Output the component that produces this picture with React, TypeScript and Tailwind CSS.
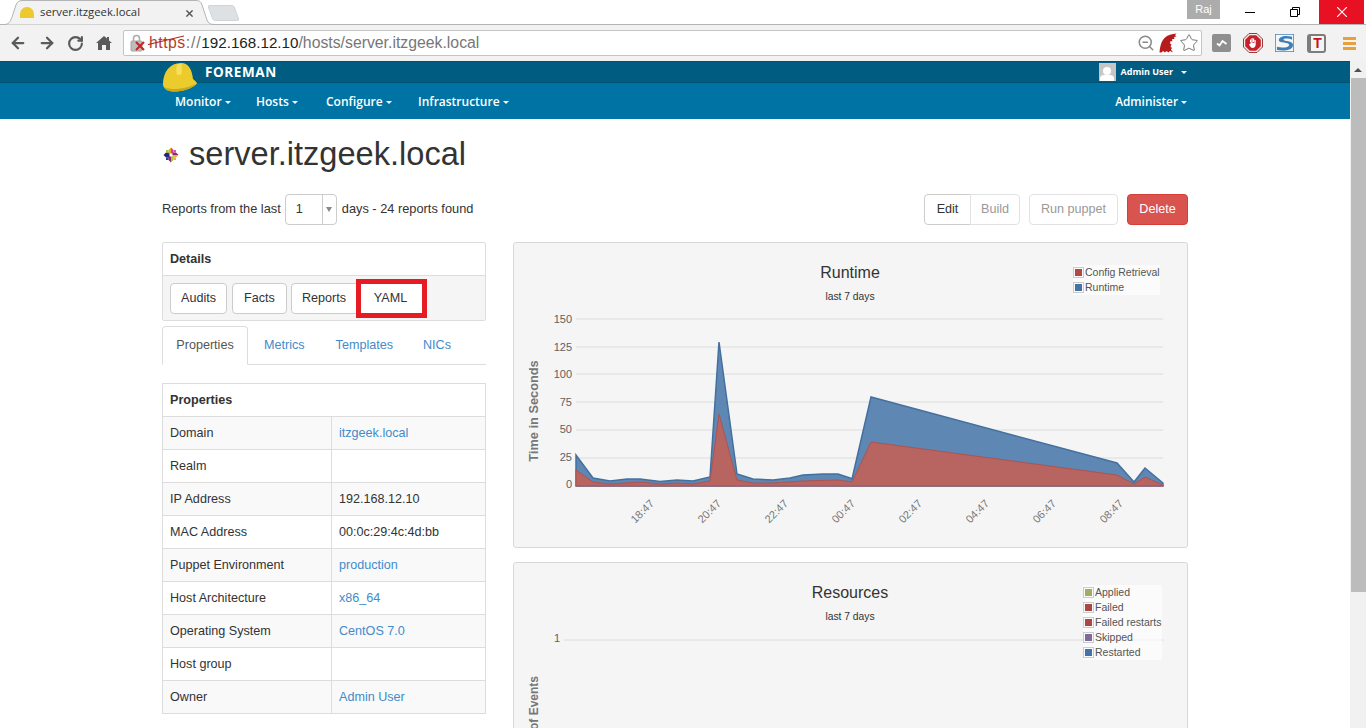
import React from "react";
import { ArrowLeft, ArrowRight, RotateCw, ZoomOut, Star } from "lucide-react";

const blue = "576,455 593,478 610,481 627,479 640,479 660,481.5 677,480 693,481 710,477 719,342 737,474 753,479 773,480 790,478 803,475 823,474 838,474 850,478 852,479 871,397 1117,463 1134,482 1145,468 1163,483";
const red = "576,470 593,482 610,484 640,482 660,484 677,483 693,484 710,481 719,414 737,480 753,483 773,483 803,481 838,480 852,482 871,442 1117,475 1134,484 1145,477 1163,485";
const ox = 514, oy = 243;
const shift = (s: string) => s.split(" ").map(p => { const [x, y] = p.split(",").map(Number); return `${x - ox},${y - oy}`; }).join(" ");
const baseY = 486 - oy;
const x0 = 576 - ox, x1 = 1163 - ox;

function Caret() {
  return <span className="inline-block ml-[3px] align-middle w-0 h-0 border-x-[3.5px] border-x-transparent border-t-[3.5px] border-t-white" />;
}

function Helmet() {
  return (
    <svg viewBox="0 0 36 30" className="absolute left-[0px] top-[0px] w-[36px] h-[30px]">
      <path d="M1 22C1 10 8 1 19 1C27 1 30 8 31 17C33 19 35 20 35 21.500C30 27 20 29.500 12 29.500C6 29.500 1 27 1 22Z" fill="#eccb2c" />
      <path d="M2 25C6 27 12 27.500 17 26.800C24 26 30 24 35 21.500C30 27 20 29.500 12 29.500C7 29.500 3.500 28 2 25Z" fill="#c9a81c" />
      <path d="M15 2.500C14 6 14 10 15 13L19.500 12.500C20 9 20 5 19.500 1.500Z" fill="#f6df5c" />
    </svg>
  );
}

function CentosLogo() {
  return (
    <svg viewBox="0 0 16 16" className="w-4 h-4 mr-[10px] mt-[18px] ml-px shrink-0">
      <path d="M8 0.500L10.500 3V6.500H8Z" fill="#d63f9b" />
      <path d="M15.500 8L13 10.500H9.500V8Z" fill="#e8b23c" />
      <path d="M8 15.500L5.500 13V9.500H8Z" fill="#932279" />
      <path d="M0.500 8L3 5.500H6.500V8Z" fill="#262577" />
      <path d="M8 0.500L5.500 3V6.500H8Z" fill="#efa724" />
      <path d="M15.500 8L13 5.500H9.500V8Z" fill="#932279" />
      <path d="M8 15.500L10.500 13V9.500H8Z" fill="#9ccd2a" />
      <path d="M0.500 8L3 10.500H6.500V8Z" fill="#262577" />
      <rect x="10.500" y="3" width="2.500" height="2.500" fill="#c85fa8" />
      <rect x="10.500" y="10.500" width="2.500" height="2.500" fill="#e8b23c" />
      <rect x="3" y="10.500" width="2.500" height="2.500" fill="#3a3a8c" />
      <rect x="3" y="3" width="2.500" height="2.500" fill="#9ccd2a" />
    </svg>
  );
}

function Toolbar() {
  return (
    <div className="h-[36px] bg-[#f2f2f2] flex items-center text-[#5a5a5a]">
      <div className="w-[123px] flex items-center pl-[9px]">
        <ArrowLeft size={18} strokeWidth={3} />
        <ArrowRight size={18} strokeWidth={3} className="ml-[11px]" />
        <RotateCw size={17} strokeWidth={3} className="ml-[11px]" />
        <svg viewBox="0 0 16 16" className="w-[16px] h-[16px] ml-[12px]">
          <path d="M8 1L11 3.600V2H13V5.400L16 8H14V15H10V10H6V15H2V8H0Z" fill="#5a5a5a" />
        </svg>
      </div>
      <div className="w-[1079px] h-[26px] bg-white border border-[#c4c4c4] rounded-[2px] flex items-center">
        <div className="relative w-[25px] h-full shrink-0">
          <svg viewBox="0 0 16 18" className="absolute left-[6px] top-[3px] w-[16px] h-[18px]">
            <rect x="1" y="7" width="11" height="10" rx="1" fill="#bdbdbd" stroke="#a4a4a4" />
            <path d="M3.500 7V4.500a3 3 0 0 1 6 0V7" fill="none" stroke="#aaa" strokeWidth="1.500" />
            <path d="M6 8L14 16M14 8L6 16" stroke="#c8241b" strokeWidth="2" />
          </svg>
        </div>
        <span className="text-[15.800px] leading-none text-[#777] relative whitespace-nowrap">
          <span className="text-[#b04030] tracking-[0.5px]">https</span>
          <svg viewBox="0 0 36 10" className="absolute left-[-1px] top-[0px] w-[36px] h-[10px]"><line x1="0" y1="9.500" x2="36" y2="1" stroke="#b0281c" strokeWidth="1.200" /></svg>
          <span className="tracking-[0.8px]">://</span><span className="text-[#222] text-[15.200px]">192.168.12.10</span>/hosts/server.itzgeek.local
        </span>
        <div className="ml-auto flex items-center pr-[2px]">
          <ZoomOut size={18} strokeWidth={2} className="text-[#8a8a8a] mr-[4px]" />
          <svg viewBox="0 0 18 20" className="w-[18px] h-[20px]">
            <path d="M0.500 19.500C1 14 2 8.500 5.500 5C8.500 2 13 0.800 17.500 0.500L16 2.200L17.500 3.500L15 4L15.500 6L13.200 6L13.200 8.500L11.500 8L11 10.500L12.500 11.500L11.500 13.500L13 15L12 16.500L14 19.500L11 18L9.500 19.500L7.500 18L6 19.500L4 18L2.500 19.500Z" fill="#b71c1c" />
          </svg>
          <Star size={20} strokeWidth={1.200} className="text-[#777] ml-[2px]" />
        </div>
      </div>
      <div className="flex-1 flex items-center pl-[10px]">
        <div className="w-[19px] h-[18px] bg-[#8f8f8f] rounded-[2px] flex items-center justify-center">
          <svg viewBox="0 0 12 8" className="w-[12px] h-[8px]"><path d="M1 4.500L3.500 6.500L6.500 2L10.500 5" fill="none" stroke="#fff" strokeWidth="1.800" /></svg>
        </div>
        <svg viewBox="0 0 20 20" className="w-[20px] h-[20px] ml-[12px]">
          <polygon points="6,0.500 14,0.500 19.500,6 19.500,14 14,19.500 6,19.500 0.500,14 0.500,6" fill="#f4eaea" stroke="#8c2a2a" strokeWidth="0.900" />
          <polygon points="6.800,2.200 13.200,2.200 17.800,6.800 17.800,13.200 13.200,17.800 6.800,17.800 2.200,13.200 2.200,6.800" fill="#c8202a" />
          <path d="M7 9V6.500h1.200V9M8.500 9V5h1.200V9M10 9V5.500h1.200V9M11.500 10V7h1.200V11.500C12.700 14 11 15 9.500 15C8 15 7.300 13.500 6 11.500L7 10.800L7.500 11V9Z" fill="#fff" />
        </svg>
        <svg viewBox="0 0 20 19" className="w-[19px] h-[18px] ml-[12px]">
          <rect width="20" height="19" fill="#f5f5f5" stroke="#3f7fb8" strokeWidth="1.500" />
          <path d="M18 3C10 1 4 3 4 6.500C4 10 15 8 15 11.500C15 14 8 15 2 13.500L2 17C11 18.500 19 16.500 19 11.500C19 6.500 9 8 9 6C9 4.500 14 4.500 18 6Z" fill="#3f7fb8" />
        </svg>
        <div className="w-[19px] h-[19px] ml-[13px] bg-[#f4f4f4] border-2 border-l-4 border-[#7d7d7d] rounded-[3px] flex items-center justify-center">
          <span className="text-[14px] leading-none font-bold text-[#c4161c] font-['Liberation_Sans',sans-serif]">T</span>
        </div>
        <div className="ml-[17px] w-[13px] flex flex-col gap-[2px]">
          <span className="h-[3px] bg-[#e8a13a]" /><span className="h-[3px] bg-[#e8a13a]" /><span className="h-[3px] bg-[#e8a13a]" />
        </div>
      </div>
    </div>
  );
}

function TabStrip() {
  return (
    <div className="h-[25px] bg-white border-b border-[#b4b4b4] relative flex font-['Open_Sans',sans-serif]">
      <div className="relative w-[212px] h-[25px] ml-[4px] flex items-center pl-[16px]">
        <svg viewBox="0 0 212 25" className="absolute inset-0 w-[212px] h-[25px]">
          <path d="M0 24.500C5 24.500 6 22 8 17L12 5C13 2 15 0.500 18 0.500H192C196 0.500 197 2 198 5L203 20C204 23 206 24.500 210 24.500" fill="#f2f2f2" stroke="#b4b4b4" />
        </svg>
        <span className="relative w-[14px] h-[11px] mt-[-1px] rounded-t-full rounded-b-[3px] bg-[#ecc92c]" />
        <span className="relative ml-[6px] text-[11.300px] text-[#333] whitespace-nowrap">server.itzgeek.local</span>
        <svg viewBox="0 0 8 8" className="absolute left-[182px] top-[10px] w-[7px] h-[7px]"><path d="M0.500 0.500L7.500 7.500M7.500 0.500L0.500 7.500" stroke="#555" strokeWidth="1.600" /></svg>
      </div>
      <div className="w-[27px] h-[16px] mt-[5px] -ml-[6px] bg-[#dde1e4] rounded-[3px] skew-x-[20deg] border border-[#d0d4d8]" />
      <div className="ml-auto flex">
        <div className="w-[33px] h-[19px] bg-[#acacac] flex items-center justify-center text-[11px] text-white font-['Liberation_Sans',sans-serif] mr-[7px]">Raj</div>
        <div className="w-[46px] h-[24px] flex items-center justify-center"><span className="w-[10px] h-[1px] mt-[1px] bg-black" /></div>
        <div className="w-[46px] h-[24px] flex items-center justify-center pr-[2px]">
          <svg viewBox="0 0 10 10" className="w-[10px] h-[10px]"><path d="M0.500 2.500H7.500V9.500H0.500ZM2.500 2.500V0.500H9.500V7.500H7.500" fill="none" stroke="#000" /></svg>
        </div>
        <div className="w-[45px] h-[24px] bg-[#e81123] flex items-center justify-center mr-[2px]">
          <svg viewBox="0 0 10 10" className="w-[10px] h-[10px]"><path d="M0 0L10 10M10 0L0 10" stroke="#fff" strokeWidth="1.100" /></svg>
        </div>
      </div>
    </div>
  );
}

function Nav() {
  return (
    <div className="font-['Open_Sans',sans-serif] text-white">
      <div className="h-[22px] bg-[#005c80] border-y border-[#00506f]">
        <div className="relative w-[1026px] ml-[162px] h-full flex items-center">
          <Helmet />
          <span className="ml-[43px] mt-[1px] text-[13.500px] font-bold tracking-[0.6px]">FOREMAN</span>
          <div className="ml-auto flex items-center mr-[1px]">
            <span className="w-[17px] h-[18px] bg-[#c6c6c6] flex flex-col items-center justify-end overflow-hidden mr-[5px]">
              <span className="w-[8px] h-[8px] rounded-full bg-white" />
              <span className="w-[14px] h-[6px] rounded-t-[4px] bg-white" />
            </span>
            <span className="text-[9px] font-bold">Admin User</span>
            <span className="w-[5px]" />
            <Caret />
          </div>
        </div>
      </div>
      <div className="h-[36px] bg-[#0073a5]">
        <div className="w-[1026px] ml-[162px] h-full flex items-center text-[12px] font-semibold pt-[1px]">
          <a className="ml-[13px] w-[81px]">Monitor<Caret /></a>
          <a className="w-[70px]">Hosts<Caret /></a>
          <a className="w-[92px]">Configure<Caret /></a>
          <a>Infrastructure<Caret /></a>
          <a className="ml-auto mr-[1px] text-[11.800px]">Administer<Caret /></a>
        </div>
      </div>
    </div>
  );
}

function Btn({ children, className = "" }: { children: React.ReactNode; className?: string }) {
  return <span className={"h-[31px] flex items-center justify-center border border-[#ccc] rounded-[4px] bg-white " + className}>{children}</span>;
}

function LeftColumn() {
  const rows: [string, string, boolean][] = [
    ["Domain", "itzgeek.local", true],
    ["Realm", "", false],
    ["IP Address", "192.168.12.10", false],
    ["MAC Address", "00:0c:29:4c:4d:bb", false],
    ["Puppet Environment", "production", true],
    ["Host Architecture", "x86_64", true],
    ["Operating System", "CentOS 7.0", true],
    ["Host group", "", false],
    ["Owner", "Admin User", true],
  ];
  return (
    <div className="w-[324px] shrink-0">
      <div className="border border-[#ddd] rounded-[2px]">
        <div className="h-[33px] flex items-center px-[7px] font-bold border-b border-[#ddd]">Details</div>
        <div className="h-[44px] bg-[#f5f5f5] flex items-center pl-[7px] relative">
          <Btn className="w-[57px] mr-[5px]">Audits</Btn>
          <Btn className="w-[55px] mr-[4px]">Facts</Btn>
          <Btn className="w-[68px] pr-[2px]">Reports</Btn>
          <span className="relative h-[39px] w-[71px] -ml-[3px] pr-[2px] border-[5px] border-[#e51c23] bg-white flex items-center justify-center">YAML</span>
        </div>
      </div>
      <div className="h-[39px] mt-[5px] border-b border-[#ddd] flex">
        <span className="w-[86px] h-[39px] bg-white border border-[#ddd] border-b-white rounded-t-[4px] flex items-center justify-center text-[#555]">Properties</span>
        <span className="ml-[16px] flex items-center text-[#428bca]">Metrics</span>
        <span className="ml-[31px] flex items-center text-[#428bca]">Templates</span>
        <span className="ml-[30px] flex items-center text-[#428bca]">NICs</span>
      </div>
      <div className="mt-[18px] border border-[#ddd]">
        <div className="h-[32px] flex items-center px-[7px] font-bold">Properties</div>
        {rows.map(([k, v, link], i) => (
          <div key={k} className={"h-[33px] flex border-t border-[#ddd] " + (i % 2 === 0 ? "bg-[#f9f9f9]" : "bg-white")}>
            <div className="w-[169px] border-r border-[#ddd] flex items-center px-[7px]">{k}</div>
            <div className={"flex items-center px-[7px] " + (link ? "text-[#428bca]" : "")}>{v}</div>
          </div>
        ))}
      </div>
    </div>
  );
}

function Legend({ items, className }: { items: [string, string][]; className: string }) {
  return (
    <div className={"absolute bg-white/60 text-[10.500px] leading-[15px] text-[#545454] " + className}>
      {items.map(([label, c]) => (
        <div key={label} className="flex items-center h-[15px]">
          <span className="w-[11px] h-[11px] border border-[#ccc] p-px mr-px"><span className="block w-full h-full" style={{ background: c }} /></span>
          {label}
        </div>
      ))}
    </div>
  );
}

function RuntimeChart() {
  const ticks = [["150", 319, 323], ["125", 347, 351], ["100", 374, 378], ["75", 402, 406], ["50", 430, 433], ["25", 458, 461], ["0", 486, 488]] as [string, number, number][];
  const times = [["18:47", 643], ["20:47", 710], ["22:47", 777], ["00:47", 844], ["02:47", 911], ["04:47", 978], ["06:47", 1045], ["08:47", 1112]] as [string, number][];
  return (
    <svg width="673" height="304" className="block" fontFamily="'Liberation Sans', sans-serif">
      <text x={336} y={35} textAnchor="middle" fontSize="16" fill="#333">Runtime</text>
      <text x={336} y={57} textAnchor="middle" fontSize="10.300" fill="#333">last 7 days</text>
      {ticks.map(([t, y, by]) => (
        <g key={t}>
          <line x1={x0} x2={x1} y1={y - oy} y2={y - oy} stroke="#dcdcdc" />
          <text x={x0 - 4} y={by - oy} textAnchor="end" fontSize="11" fill="#606060">{t}</text>
        </g>
      ))}
      <text transform={`translate(24,${411 - oy}) rotate(-90)`} textAnchor="middle" fontSize="12.800" fontWeight="700" fill="#777">Time in Seconds</text>
      <polygon points={`${x0},${baseY} ${shift(blue)} ${x1},${baseY}`} fill="#5f87b3" stroke="#44709f" strokeWidth="1.500" />
      <polygon points={`${x0},${baseY} ${shift(red)} ${x1},${baseY}`} fill="#b86460" stroke="#ac5450" strokeWidth="1" />
      {times.map(([t, x]) => (
        <text key={t} transform={`translate(${x + 2 - ox},${514 - oy}) rotate(-45)`} textAnchor="middle" fontSize="11" fill="#777">{t}</text>
      ))}
    </svg>
  );
}

function ResourcesChart() {
  return (
    <svg width="673" height="304" className="block" fontFamily="'Liberation Sans', sans-serif">
      <text x={336} y={35} textAnchor="middle" fontSize="16" fill="#333">Resources</text>
      <text x={336} y={57} textAnchor="middle" fontSize="10.300" fill="#333">last 7 days</text>
      <line x1={50} x2={650} y1={77} y2={77} stroke="#dcdcdc" />
      <text x={46} y={79} textAnchor="end" fontSize="11" fill="#606060">1</text>
      <text transform="translate(24,113) rotate(-90)" textAnchor="end" fontSize="12" fontWeight="700" fill="#777">Number of Events</text>
    </svg>
  );
}

export default function App() {
  return (
    <div className="w-[1366px] h-[728px] overflow-hidden flex flex-col bg-white text-[12.600px] text-[#333] font-['Liberation_Sans',Arial,sans-serif]">
      <TabStrip />
      <Toolbar />
      <div className="flex-1 flex min-h-0">
        <div className="w-[1350px] min-w-0 overflow-hidden">
          <Nav />
          <div className="w-[1026px] ml-[162px]">
            <div className="flex items-start mt-[10px] h-[50px]">
              <CentosLogo />
              <h1 className="text-[32.600px] leading-[50px]">server.itzgeek.local</h1>
            </div>
            <div className="flex items-center mt-[15px] h-[31px] text-[12.800px]">
              <span className="-mt-[2px]">Reports from the last</span>
              <span className="ml-[4px] w-[52px] h-[31px] border border-[#ccc] rounded-[4px] flex items-center">
                <span className="w-[36px] pl-[10px] text-[12.600px]">1</span>
                <span className="flex-1 h-full border-l border-[#ccc] flex items-center justify-center">
                  <span className="w-0 h-0 border-x-[3px] border-x-transparent border-t-[5px] border-t-[#888]" />
                </span>
              </span>
              <span className="ml-[5px] -mt-[2px]">days - 24 reports found</span>
              <div className="ml-auto flex text-[12.600px]">
                <Btn className="w-[47px] rounded-r-none text-[#333]">Edit</Btn>
                <Btn className="w-[50px] -ml-px rounded-l-none border-[#e2e2e2] text-[#999]">Build</Btn>
                <Btn className="w-[89px] ml-[9px] border-[#e2e2e2] text-[#999]">Run puppet</Btn>
                <span className="w-[61px] ml-[9px] h-[31px] flex items-center justify-center rounded-[4px] bg-[#d9534f] border border-[#d43f3a] text-white">Delete</span>
              </div>
            </div>
            <div className="flex gap-[27px] mt-[17px]">
              <LeftColumn />
              <div className="flex-1 min-w-0">
                <div className="relative h-[306px] bg-[#f5f5f5] border border-[#d8d8d8] rounded-[3px]">
                  <RuntimeChart />
                  <Legend className="left-[559px] top-[22px]" items={[["Config Retrieval", "#af4a44"], ["Runtime", "#4572a7"]]} />
                </div>
                <div className="relative h-[306px] mt-[14px] bg-[#f5f5f5] border border-[#d8d8d8] rounded-[3px]">
                  <ResourcesChart />
                  <Legend className="left-[569px] top-[22px] bg-white" items={[["Applied", "#a2ad5f"], ["Failed", "#aa4643"], ["Failed restarts", "#aa4643"], ["Skipped", "#80699b"], ["Restarted", "#4572a7"]]} />
                </div>
              </div>
            </div>
          </div>
        </div>
        <div className="w-[16px] bg-[#f1f1f1] flex flex-col items-center">
          <div className="h-[17px] flex items-center"><span className="w-0 h-0 border-x-[4px] border-x-transparent border-b-[4px] border-b-[#505050]" /></div>
          <div className="w-[15px] h-[514px] bg-[#bcbcbc]" />
        </div>
      </div>
    </div>
  );
}
